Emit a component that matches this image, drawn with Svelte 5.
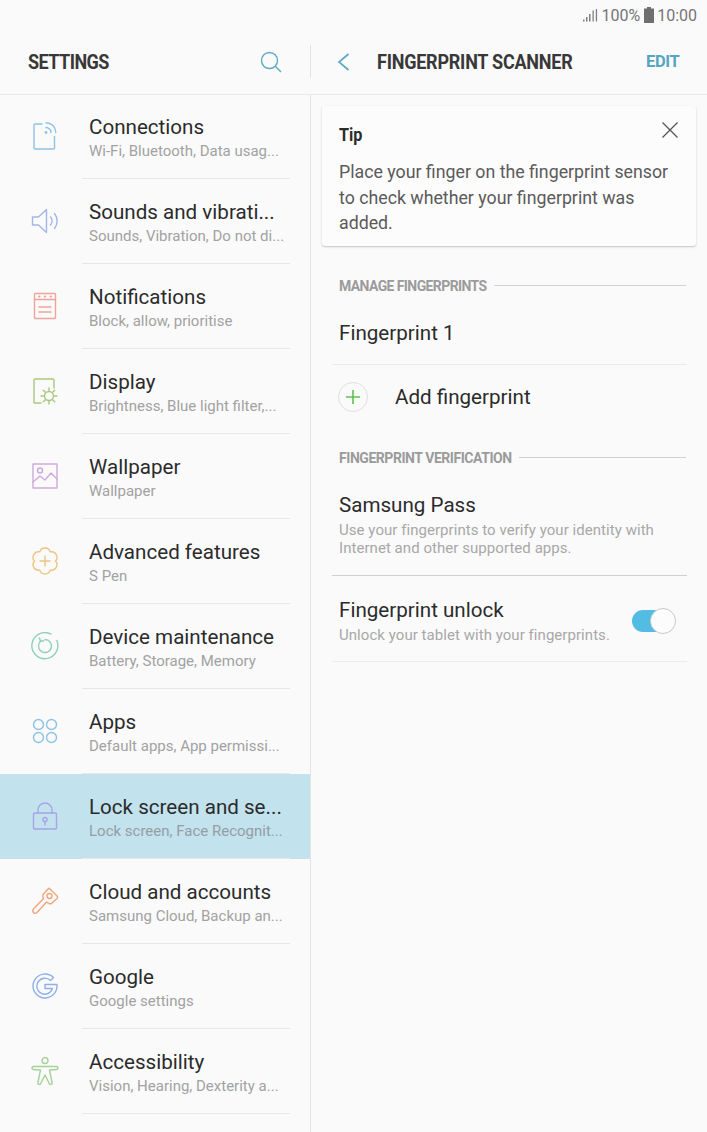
<script>
	const menu = [
		{ id: 'conn', title: 'Connections', sub: 'Wi-Fi, Bluetooth, Data usag...', color: '#8fc1e3' },
		{ id: 'sound', title: 'Sounds and vibrati...', sub: 'Sounds, Vibration, Do not di...', color: '#a3b6e8' },
		{ id: 'notif', title: 'Notifications', sub: 'Block, allow, prioritise', color: '#eda59b' },
		{ id: 'display', title: 'Display', sub: 'Brightness, Blue light filter,...', color: '#a9c77c' },
		{ id: 'wall', title: 'Wallpaper', sub: 'Wallpaper', color: '#cfa9dd' },
		{ id: 'adv', title: 'Advanced features', sub: 'S Pen', color: '#edc583' },
		{ id: 'device', title: 'Device maintenance', sub: 'Battery, Storage, Memory', color: '#8fd0b8' },
		{ id: 'apps', title: 'Apps', sub: 'Default apps, App permissi...', color: '#8fc1e3' },
		{ id: 'lock', title: 'Lock screen and se...', sub: 'Lock screen, Face Recognit...', color: '#a9a3e8', active: true },
		{ id: 'cloud', title: 'Cloud and accounts', sub: 'Samsung Cloud, Backup an...', color: '#efa67c' },
		{ id: 'google', title: 'Google', sub: 'Google settings', color: '#8fb0ec' },
		{ id: 'access', title: 'Accessibility', sub: 'Vision, Hearing, Dexterity a...', color: '#a5d19b' }
	];
</script>

<div class="screen">
	<div class="status">
		<svg width="15" height="14" viewBox="0 0 15 14" fill="#808080">
			<rect x="0" y="11.500" width="1.500" height="2" />
			<rect x="3" y="9" width="1.500" height="4.500" />
			<rect x="6" y="6" width="1.500" height="7.500" />
			<rect x="9.500" y="2.500" width="1.300" height="11" />
			<rect x="12.800" y="1" width="1.300" height="12.500" />
		</svg>
		<span class="pct">100%</span>
		<svg width="10" height="16" viewBox="0 0 10 16" fill="#6f6f6f">
			<path d="M3 0h4v1.500h3V16H0V1.500h3z" />
		</svg>
		<span>10:00</span>
	</div>

	<div class="panes">
		<aside class="left">
			<header class="bar left-bar">
				<h1>SETTINGS</h1>
				<svg class="search" width="24" height="24" viewBox="0 0 24 24" fill="none" stroke="#5fa9c4" stroke-width="1.4">
					<circle cx="10.500" cy="10.500" r="8" />
					<path d="M16.500 16.500l5.500 5.500" />
				</svg>
				<span class="bar-sep"></span>
			</header>

			<ul>
				{#each menu as item}
					<li class:active={item.active}>
						<span class="icon">
							<svg width="28" height="28" viewBox="0 0 28 28" fill="none" stroke={item.color} stroke-width="1.4" stroke-linecap="round" stroke-linejoin="round">
								{#if item.id === 'conn'}
									<path d="M11 2H4a1 1 0 0 0-1 1v23a1 1 0 0 0 1 1h18.500a1 1 0 0 0 1-1V14.500" />
									<circle cx="15" cy="10.500" r=".7" />
									<path d="M15 5.500a5 5 0 0 1 5 5M15 .7a9.800 9.800 0 0 1 9.800 9.800" />
								{:else if item.id === 'sound'}
									<path d="M1.500 10v8h6l8 7.500V2.500l-8 7.500z" />
									<path d="M19.500 10a6 6 0 0 1 0 8M23.500 6.500a12 12 0 0 1 0 15" />
								{:else if item.id === 'notif'}
									<rect x="3.500" y="1.500" width="21" height="25" rx="1" />
									<path d="M3.500 7.500h21M8 15h12M8 20h12" />
									<path d="M8 4.500h.5M13.700 4.500h.5M19.500 4.500h.5" stroke-width="2" />
								{:else if item.id === 'display'}
									<path d="M10 26H4a1 1 0 0 1-1-1V3a1 1 0 0 1 1-1h18a1 1 0 0 1 1 1v8" />
									<circle cx="18" cy="19" r="4.500" />
									<path d="M18 11v2.500M18 24.500V27M10 19h2.500M23.500 19H26M12.300 13.300l1.800 1.800M21.900 22.900l1.800 1.800M12.300 24.700l1.800-1.800M21.900 15.100l1.800-1.800" />
								{:else if item.id === 'wall'}
									<rect x="2" y="2" width="24" height="24" />
									<circle cx="9" cy="8.500" r="2.500" />
									<path d="M2 20l7-6 5 4 6-7 6 6" />
								{:else if item.id === 'adv'}
									<path d="M8.750 4.910A5.500 5.500 0 0 1 19.250 4.910A5.500 5.500 0 0 1 24.500 14A5.500 5.500 0 0 1 19.250 23.090A5.500 5.500 0 0 1 8.750 23.090A5.500 5.500 0 0 1 3.500 14A5.500 5.500 0 0 1 8.750 4.910z" />
									<path d="M14 9v10M9 14h10" />
								{:else if item.id === 'device'}
									<path d="M25.800 8.500A13 13 0 1 1 20 2.200" />
									<path d="M14 7.500A6.500 6.500 0 1 1 9.500 9.300" />
									<path d="M8.500 6l1 3.300 3.300-.5" />
								{:else if item.id === 'apps'}
									<circle cx="7.500" cy="7.500" r="5" />
									<circle cx="20.500" cy="7.500" r="5" />
									<circle cx="7.500" cy="20.500" r="5" />
									<circle cx="20.500" cy="20.500" r="5" />
								{:else if item.id === 'lock'}
									<rect x="2.500" y="11" width="23" height="16" rx="1" />
									<path d="M7 11V8a7 7 0 0 1 14 0v3" />
									<circle cx="14" cy="17.500" r="2" />
									<path d="M14 19.500v3.500" />
								{:else if item.id === 'cloud'}
									<path d="M18.500 1.500L26.500 9.500Q27 10.500 26 11.500L20.500 16.500Q19.500 17 18 16.500L15.500 15L6 25.500Q4 27 2.500 25.500Q1 24 2.500 22L12.500 11.500L11.800 9Q11.500 8 12.500 7L17 2Q18 1 18.500 1.500z" />
									<circle cx="18.500" cy="9" r="2.500" />
								{:else if item.id === 'google'}
									<path d="M22.500 5.500A12 12 0 1 0 26 14.500V12.500H14V16.500H21.500A8 8 0 1 1 19.500 8.500z" />
								{:else if item.id === 'access'}
									<circle cx="14" cy="3.500" r="3" />
									<path d="M2.500 9.500H25.500Q27 9.500 27 11Q27 12.500 25.500 12.500L18.500 13L21 25Q21.500 27.500 19.500 27.500Q18.500 27.500 18 26L14 18L10 26Q9.500 27.500 8.500 27.500Q6.500 27.500 7 25L9.500 13L2.500 12.500Q1 12.500 1 11Q1 9.500 2.500 9.500z" />
								{/if}
							</svg>
						</span>
						<div class="text">
							<div class="title">{item.title}</div>
							<div class="sub">{item.sub}</div>
						</div>
					</li>
				{/each}
			</ul>
		</aside>

		<main class="right">
			<header class="bar right-bar">
				<svg width="14" height="20" viewBox="0 0 14 20" fill="none" stroke="#5fa9c4" stroke-width="1.7">
					<path d="M11.500 2L2 10l9.500 8" />
				</svg>
				<h1>FINGERPRINT SCANNER</h1>
				<span class="edit">EDIT</span>
			</header>

			<div class="content">
				<section class="tip">
					<div class="tip-head">
						<strong>Tip</strong>
						<svg width="18" height="18" viewBox="0 0 18 18" stroke="#555" stroke-width="1.3">
							<path d="M1.500 1.500l15 15M16.500 1.500l-15 15" />
						</svg>
					</div>
					<p>Place your finger on the fingerprint sensor to check whether your fingerprint was added.</p>
				</section>

				<div class="group first">
					<span>MANAGE FINGERPRINTS</span>
					<i></i>
				</div>
				<div class="row plain">Fingerprint 1</div>
				<div class="row add">
					<span class="plus">
						<svg width="16" height="16" viewBox="0 0 16 16" stroke="#5cc24f" stroke-width="1.6">
							<path d="M8 1v14M1 8h14" />
						</svg>
					</span>
					Add fingerprint
				</div>

				<div class="group">
					<span>FINGERPRINT VERIFICATION</span>
					<i></i>
				</div>
				<div class="row pass">
					<div class="title">Samsung Pass</div>
					<div class="sub">Use your fingerprints to verify your identity with Internet and other supported apps.</div>
				</div>
				<div class="row unlock">
					<div>
						<div class="title">Fingerprint unlock</div>
						<div class="sub">Unlock your tablet with your fingerprints.</div>
					</div>
					<span class="switch"><span class="knob"></span></span>
				</div>
			</div>
		</main>
	</div>
</div>

<style>
	:global(body) {
		margin: 0;
		background: #fafafa;
	}

	.screen {
		width: 707px;
		height: 1132px;
		overflow: hidden;
		background: #fafafa;
		font-family: Roboto, 'Liberation Sans', sans-serif;
		color: #2b2b2b;
	}

	.status {
		height: 30px;
		display: flex;
		align-items: center;
		justify-content: flex-end;
		gap: 3px;
		padding-right: 10px;
		font-size: 16px;
		color: #757575;
	}

	.pct {
		margin-right: 1px;
	}

	.panes {
		display: flex;
		height: 1102px;
	}

	.left {
		width: 310px;
		flex: none;
	}

	.right {
		flex: 1;
		min-width: 0;
		display: flex;
		flex-direction: column;
	}

	.bar {
		height: 65px;
		box-sizing: border-box;
		border-bottom: 1px solid #e8e8e8;
		display: flex;
		align-items: center;
		flex: none;
		position: relative;
	}

	.bar h1 {
		margin: 0;
		font-size: 20px;
		font-weight: 700;
		color: #383838;
		transform: scaleX(0.9);
		transform-origin: left center;
		white-space: nowrap;
	}

	.left-bar {
		padding-left: 28px;
	}

	.left-bar h1 {
		letter-spacing: -0.6px;
	}

	.search {
		position: absolute;
		left: 259px;
		top: 20px;
	}

	.bar-sep {
		position: absolute;
		right: -1px;
		top: 15px;
		width: 1px;
		height: 33px;
		background: #e3e3e3;
	}

	.right-bar {
		padding-left: 27px;
	}

	.right-bar h1 {
		margin-left: 26px;
		letter-spacing: -0.25px;
	}

	.edit {
		position: absolute;
		left: 336px;
		top: 22px;
		font-size: 16.500px;
		font-weight: 700;
		color: #55a5c3;
		letter-spacing: -0.4px;
	}

	ul {
		list-style: none;
		margin: -1px 0 0;
		padding: 0;
	}

	li {
		height: 85px;
		display: flex;
		align-items: center;
		position: relative;
	}

	li::after {
		content: '';
		position: absolute;
		left: 82px;
		width: 208px;
		bottom: 0;
		height: 1px;
		background: #e8e8e8;
	}

	li.active {
		background: #c2e2ee;
	}

	li.active .sub {
		color: #949ea3;
	}

	.icon {
		width: 89px;
		flex: none;
		display: flex;
		justify-content: center;
		margin-top: -1px;
	}

	.text {
		white-space: nowrap;
		margin-top: 1px;
	}

	.title {
		font-size: 20.600px;
		line-height: 26px;
		color: #2b2b2b;
	}

	.sub {
		font-size: 15px;
		line-height: 18px;
		margin-top: 2.500px;
		color: #a2a2a2;
	}

	.content {
		flex: 1;
		border-left: 1px solid #e3e3e3;
		padding: 0 20px 0 21px;
	}

	.tip {
		margin: 11px -9px 0 -10px;
		height: 140px;
		box-sizing: border-box;
		background: #fcfcfc;
		border-radius: 3px;
		box-shadow: 0 1px 2px rgba(0, 0, 0, 0.22);
		padding: 17px 17px 0;
	}

	.tip-head {
		display: flex;
		justify-content: space-between;
		align-items: flex-start;
	}

	.tip-head strong {
		font-size: 18px;
		font-weight: 700;
		line-height: 24px;
		color: #2b2b2b;
		transform: scaleX(0.9);
		transform-origin: left center;
	}

	.tip-head svg {
		margin-top: -2px;
	}

	.tip p {
		margin: 13px 0 0;
		font-size: 17.750px;
		line-height: 25.500px;
		color: #5a5a5a;
	}

	.group {
		display: flex;
		align-items: center;
		gap: 7px;
		height: 18px;
		margin: 19px 1px 0 7px;
		font-size: 14px;
		font-weight: 700;
		color: #9b9b9b;
		white-space: nowrap;
	}

	.group.first {
		margin-top: 30px;
	}

	.group span {
		letter-spacing: -0.45px;
		padding-top: 1px;
	}

	.group.first span {
		letter-spacing: -0.6px;
	}

	.group i {
		flex: 1;
		height: 1px;
		background: #d2d2d2;
	}

	.row {
		box-sizing: border-box;
	}

	.plain {
		height: 71px;
		padding: 26px 0 0 7px;
		font-size: 20.600px;
		line-height: 26px;
		border-bottom: 1px solid #ececec;
	}

	.add {
		height: 64px;
		display: flex;
		align-items: center;
		gap: 27px;
		padding-left: 6px;
		font-size: 20.600px;
	}

	.plus {
		width: 30px;
		height: 30px;
		box-sizing: border-box;
		border: 1px solid #e0e0e0;
		border-radius: 50%;
		display: flex;
		align-items: center;
		justify-content: center;
	}

	.pass {
		height: 110px;
		padding: 26px 0 0 7px;
		border-bottom: 1px solid #cfcfcf;
	}

	.pass .sub,
	.unlock .sub {
		color: #a8a8a8;
		letter-spacing: 0.05px;
	}

	.unlock {
		height: 86px;
		display: flex;
		justify-content: space-between;
		align-items: center;
		padding: 4px 10px 0 7px;
		border-bottom: 1px solid #ececec;
	}

	.switch {
		width: 42px;
		height: 22px;
		border-radius: 11px;
		background: #52bce3;
		position: relative;
		margin-right: 3px;
	}

	.knob {
		position: absolute;
		right: -2px;
		top: -2px;
		width: 26px;
		height: 26px;
		box-sizing: border-box;
		border-radius: 50%;
		background: #fcfcfc;
		border: 1px solid #c9c9c9;
	}
</style>
